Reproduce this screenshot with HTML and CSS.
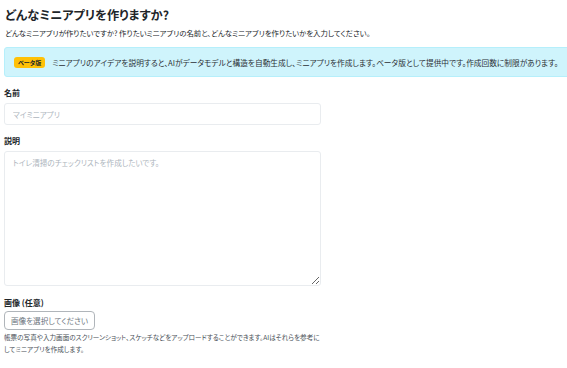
FILE: index.html
```html
<!DOCTYPE html>
<html lang="ja">
<head>
  <meta charset="UTF-8">
  <meta name="viewport" content="width=device-width, initial-scale=1.0">
  <title>ミニアプリ作成</title>
  <link rel="stylesheet" href="styles.css">
</head>
<body>
  <div class="page">
    <h1>どんなミニアプリを作りますか?</h1>
    <p class="lead">どんなミニアプリが作りたいですか? 作りたいミニアプリの名前と、どんなミニアプリを作りたいかを入力してください。</p>
    <div class="alert">
      <span class="badge">ベータ版</span>
      <span>ミニアプリのアイデアを説明すると、AIがデータモデルと構造を自動生成し、ミニアプリを作成します。ベータ版として提供中です。作成回数に制限があります。</span>
    </div>
    <form class="form">
      <div class="field">
        <label for="app-name">名前</label>
        <input type="text" id="app-name" placeholder="マイミニアプリ">
      </div>
      <div class="field">
        <label for="app-desc">説明</label>
        <textarea id="app-desc" placeholder="トイレ清掃のチェックリストを作成したいです。"></textarea>
      </div>
      <div class="field field-image">
        <label>画像 (任意)</label>
        <button type="button" class="file-btn">画像を選択してください</button>
        <p class="help">帳票の写真や入力画面のスクリーンショット、スケッチなどをアップロードすることができます。AIはそれらを参考にしてミニアプリを作成します。</p>
      </div>
    </form>
  </div>
</body>
</html>
```
FILE: styles.css
```css
* {
  margin: 0;
  padding: 0;
  box-sizing: border-box;
}
body {
  font-family: "Noto Sans CJK JP", "Noto Sans", sans-serif;
  font-feature-settings: "palt";
  color: #212529;
  background: #fff;
  overflow: hidden;
}
.page {
  padding: 7px 0 0 4px;
}
h1 {
  font-size: 12.2px;
  font-weight: 700;
  line-height: 16px;
  padding-left: 1px;
}
.lead {
  font-size: 7.4px;
  line-height: 12px;
  margin-top: 4px;
  padding-left: 1px;
}
.alert {
  display: flex;
  align-items: center;
  gap: 7px;
  margin-top: 8px;
  margin-right: -10px;
  height: 30px;
  padding: 0 9px;
  background: #cff4fc;
  border: 1px solid #b6effb;
  border-radius: 3px;
  font-size: 7.7px;
  color: #2b3035;
}
.badge {
  background: #ffc107;
  color: #212529;
  font-size: 6px;
  font-weight: 700;
  padding: 1px 4px;
  border-radius: 3px;
  line-height: 9px;
}
.form {
  width: 317px;
  margin-top: 10px;
}
.field {
  margin-bottom: 10px;
}
.field-image {
  margin-top: 11px;
}
label {
  display: block;
  font-size: 8px;
  font-weight: 700;
  line-height: 11px;
  margin-bottom: 5px;
}
input,
textarea {
  display: block;
  width: 100%;
  font-family: inherit;
  font-feature-settings: "palt";
  font-size: 7.6px;
  color: #212529;
  border: 1px solid #e9ecef;
  border-radius: 3px;
  padding: 0 8px;
}
input {
  height: 22px;
}
textarea {
  height: 135px;
  padding-top: 5px;
  resize: vertical;
}
::placeholder {
  color: #adb5bd;
}
.field-image label {
  margin-bottom: 3px;
}
.file-btn {
  display: block;
  font-family: inherit;
  font-feature-settings: "palt";
  font-size: 7.6px;
  color: #6c757d;
  background: #fff;
  border: 1px solid #b0b5ba;
  border-radius: 4px;
  height: 19px;
  width: 91px;
}
.help {
  font-size: 6.6px;
  line-height: 12px;
  color: #495057;
  margin-top: 1px;
}
```
